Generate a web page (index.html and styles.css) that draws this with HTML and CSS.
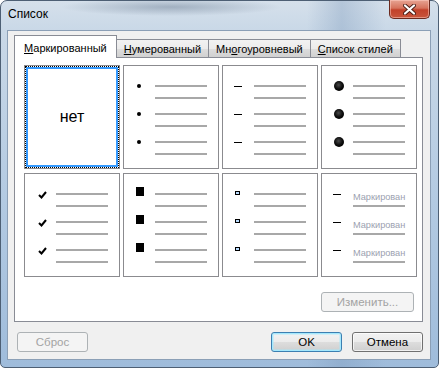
FILE: index.html
```html
<!DOCTYPE html>
<html lang="ru">

<head>
    <meta charset="UTF-8">
    <title>Список</title>
    <link rel="stylesheet" href="styles.css">
</head>

<body>
    <div class="window">
        <div class="titlebar">
            <span class="title">Список</span>
            <button class="close-btn" title="Закрыть">
                <svg width="13" height="11" viewBox="0 0 13 11">
                    <path d="M2 1.5 L11 9.5 M11 1.5 L2 9.5" stroke="#4a1d16" stroke-width="4" stroke-linecap="round" fill="none" />
                    <path d="M2 1.5 L11 9.5 M11 1.5 L2 9.5" stroke="#ffffff" stroke-width="2.2" stroke-linecap="round" fill="none" />
                </svg>
            </button>
        </div>

        <div class="client">
            <div class="tabs">
                <div class="tab active"><u>М</u>аркированный</div>
                <div class="tab"><u>Н</u>умерованный</div>
                <div class="tab">Мн<u>о</u>гоуровневый</div>
                <div class="tab"><u>С</u>писок стилей</div>
            </div>

            <div class="panel">
                <div class="gallery">
                    <!-- row 1 -->
                    <div class="tile selected">
                        <div class="focus">
                            <div class="none-box">нет</div>
                        </div>
                    </div>
                    <div class="tile">
                        <div class="item"><span class="mark"><span class="dot"></span></span><span class="lines"><span class="line"></span><span class="line"></span></span></div>
                        <div class="item"><span class="mark"><span class="dot"></span></span><span class="lines"><span class="line"></span><span class="line"></span></span></div>
                        <div class="item"><span class="mark"><span class="dot"></span></span><span class="lines"><span class="line"></span><span class="line"></span></span></div>
                    </div>
                    <div class="tile">
                        <div class="item"><span class="mark"><span class="dash"></span></span><span class="lines"><span class="line"></span><span class="line"></span></span></div>
                        <div class="item"><span class="mark"><span class="dash"></span></span><span class="lines"><span class="line"></span><span class="line"></span></span></div>
                        <div class="item"><span class="mark"><span class="dash"></span></span><span class="lines"><span class="line"></span><span class="line"></span></span></div>
                    </div>
                    <div class="tile">
                        <div class="item"><span class="mark"><span class="ball"></span></span><span class="lines"><span class="line"></span><span class="line"></span></span></div>
                        <div class="item"><span class="mark"><span class="ball"></span></span><span class="lines"><span class="line"></span><span class="line"></span></span></div>
                        <div class="item"><span class="mark"><span class="ball"></span></span><span class="lines"><span class="line"></span><span class="line"></span></span></div>
                    </div>

                    <!-- row 2 -->
                    <div class="tile">
                        <div class="item"><span class="mark"><svg class="check" width="9" height="8" viewBox="0 0 9 8"><path d="M1 4 L3.5 6.5 L8 1" stroke="#000" stroke-width="2" fill="none" /></svg></span><span class="lines"><span class="line"></span><span class="line"></span></span></div>
                        <div class="item"><span class="mark"><svg class="check" width="9" height="8" viewBox="0 0 9 8"><path d="M1 4 L3.5 6.5 L8 1" stroke="#000" stroke-width="2" fill="none" /></svg></span><span class="lines"><span class="line"></span><span class="line"></span></span></div>
                        <div class="item"><span class="mark"><svg class="check" width="9" height="8" viewBox="0 0 9 8"><path d="M1 4 L3.5 6.5 L8 1" stroke="#000" stroke-width="2" fill="none" /></svg></span><span class="lines"><span class="line"></span><span class="line"></span></span></div>
                    </div>
                    <div class="tile">
                        <div class="item"><span class="mark"><span class="square"></span></span><span class="lines"><span class="line"></span><span class="line"></span></span></div>
                        <div class="item"><span class="mark"><span class="square"></span></span><span class="lines"><span class="line"></span><span class="line"></span></span></div>
                        <div class="item"><span class="mark"><span class="square"></span></span><span class="lines"><span class="line"></span><span class="line"></span></span></div>
                    </div>
                    <div class="tile">
                        <div class="item"><span class="mark"><span class="box"></span></span><span class="lines"><span class="line"></span><span class="line"></span></span></div>
                        <div class="item"><span class="mark"><span class="box"></span></span><span class="lines"><span class="line"></span><span class="line"></span></span></div>
                        <div class="item"><span class="mark"><span class="box"></span></span><span class="lines"><span class="line"></span><span class="line"></span></span></div>
                    </div>
                    <div class="tile">
                        <div class="item"><span class="mark"><span class="dash"></span></span><span class="lines"><span class="label"><span>Маркирован</span></span><span class="line"></span></span></div>
                        <div class="item"><span class="mark"><span class="dash"></span></span><span class="lines"><span class="label"><span>Маркирован</span></span><span class="line"></span></span></div>
                        <div class="item"><span class="mark"><span class="dash"></span></span><span class="lines"><span class="label"><span>Маркирован</span></span><span class="line"></span></span></div>
                    </div>
                </div>

                <div class="panel-footer">
                    <button class="btn btn-change" disabled>Изменить...</button>
                </div>
            </div>

            <div class="footer">
                <button class="btn" disabled>Сброс</button>
                <div class="footer-right">
                    <button class="btn btn-default">OK</button>
                    <button class="btn">Отмена</button>
                </div>
            </div>
        </div>
    </div>
</body>

</html>
```

FILE: styles.css
```css
body {
    margin: 0;
    padding: 0;
    font-family: "Liberation Sans", Arial, sans-serif;
    font-size: 11px;
    color: #000;
}

/* window frame */
.window {
    width: 439px;
    height: 368px;
    box-sizing: border-box;
    display: flex;
    flex-direction: column;
    padding: 0 7px 7px 6px;
    border: 1px solid #4d5f74;
    border-radius: 7px 7px 5px 5px;
    background:
        radial-gradient(ellipse 110px 9px at 170px 6px, rgba(70, 90, 115, 0.35), rgba(70, 90, 115, 0) 100%),
        linear-gradient(90deg, rgba(255, 255, 255, 0) 70%, rgba(120, 150, 185, 0.35) 78%, rgba(255, 255, 255, 0) 88%),
        linear-gradient(180deg, #d5e0eb 0, #c9d8e7 30px, #b3cae2 200px, #9fbcdb 100%);
}

.titlebar {
    height: 29px;
    display: flex;
    align-items: flex-start;
    justify-content: space-between;
}

.title {
    margin: 5px 0 0 1px;
    font-size: 12px;
    line-height: 16px;
}

.close-btn {
    width: 41px;
    height: 19px;
    margin: -1px 1px 0 0;
    padding: 0;
    display: flex;
    align-items: center;
    justify-content: center;
    border: 1px solid #6b2a1f;
    border-top: none;
    border-radius: 0 0 5px 5px;
    background: linear-gradient(180deg, #e7a493 0, #d6735d 45%, #c2412a 55%, #c8553c 100%);
    box-shadow: inset 0 0 0 1px rgba(255, 210, 200, 0.5);
}

/* dialog body */
.client {
    flex: 1;
    box-sizing: border-box;
    display: flex;
    flex-direction: column;
    padding: 4px 7px 0 6px;
    border: 1px solid #8b9fb6;
    background-color: #f0f0f0;
}

.tabs {
    display: flex;
    align-items: flex-end;
    height: 23px;
    padding-left: 2px;
    margin-bottom: -1px;
}

.tab {
    height: 18px;
    line-height: 19px;
    padding: 0 7px;
    margin-right: -1px;
    border: 1px solid #898c95;
    border-bottom: none;
    background: linear-gradient(180deg, #f2f2f2 0, #ebebeb 50%, #dddddd 51%, #cfcfcf 100%);
    white-space: nowrap;
}

.tab u {
    text-decoration-thickness: 1px;
}

.tab.active {
    position: relative;
    z-index: 1;
    height: 22px;
    line-height: 25px;
    padding: 0 9px;
    margin: 0 -1px 0 -2px;
    background: #fff;
}

.panel {
    height: 265px;
    box-sizing: border-box;
    display: flex;
    flex-direction: column;
    justify-content: space-between;
    border: 1px solid #898c95;
    background-color: #fff;
}

.gallery {
    display: grid;
    grid-template-columns: repeat(4, 96px);
    grid-auto-rows: 104px;
    gap: 4px 3px;
    padding: 7px 0 0 9px;
}

.tile {
    box-sizing: border-box;
    padding-top: 19px;
    border: 1px solid #8b8b8f;
    background-color: #fff;
}

.tile.selected {
    padding: 0;
}

.focus {
    height: 100%;
    box-sizing: border-box;
    border: 1px dotted #000;
}

.none-box {
    height: 100%;
    box-sizing: border-box;
    display: flex;
    align-items: center;
    justify-content: center;
    border: 2px solid #3399ff;
    font-size: 16px;
}

.item {
    display: flex;
    height: 14px;
    margin-bottom: 14px;
}

.mark {
    width: 31px;
    height: 2px;
    display: flex;
    align-items: center;
    justify-content: center;
}

.lines {
    width: 52px;
    display: flex;
    flex-direction: column;
    gap: 10px;
}

.line {
    height: 2px;
    background-color: #a8a8a8;
}

.dot {
    flex: none;
    width: 4px;
    height: 4px;
    margin-right: 2px;
    border-radius: 50%;
    background-color: #000;
}

.dash {
    flex: none;
    width: 8px;
    height: 1px;
    margin: 1px 2px 0 0;
    background-color: #000;
}

.ball {
    flex: none;
    width: 10px;
    height: 10px;
    margin-left: 2px;
    border-radius: 50%;
    background: radial-gradient(circle at 45% 40%, #4a4a4a 0, #111 45%, #000 70%, #3a2000 100%);
}

.check {
    flex: none;
    margin: 1px 0 0 4px;
}

.square {
    flex: none;
    width: 8px;
    height: 9px;
    margin-top: -5px;
    background-color: #000;
}

.box {
    flex: none;
    width: 3px;
    height: 2px;
    margin: -3px 2px 0 0;
    border: 1px solid #000;
    background-color: #b9dcff;
}

.label {
    height: 2px;
    display: flex;
    align-items: center;
    overflow: visible;
}

.label span {
    margin-top: 5px;
    font-size: 9.2px;
    line-height: 10px;
    color: #9b9fb0;
    white-space: nowrap;
}

.panel-footer {
    display: flex;
    justify-content: flex-end;
    padding: 0 8px 9px 0;
}

/* buttons */
.btn {
    width: 71px;
    height: 20px;
    padding: 0;
    font-family: inherit;
    font-size: 11.5px;
    color: #000;
    border: 1px solid #707070;
    border-radius: 3px;
    background: linear-gradient(180deg, #f2f2f2 0, #ebebeb 50%, #dddddd 51%, #cfcfcf 100%);
    box-shadow: inset 0 0 0 1px rgba(255, 255, 255, 0.7);
}

.btn:disabled {
    color: #a3a3a3;
    border-color: #adb2b5;
    background: #f4f4f4;
    box-shadow: none;
}

.btn-change {
    width: 93px;
}

.btn-default {
    border-color: #3c7fb1;
    box-shadow: inset 0 0 0 1px #a4e8fd, inset 0 0 0 2px rgba(164, 232, 253, 0.4);
}

.footer {
    display: flex;
    justify-content: space-between;
    align-items: center;
    margin-top: 10px;
    padding-left: 3px;
}

.footer-right {
    display: flex;
    gap: 10px;
}
```
